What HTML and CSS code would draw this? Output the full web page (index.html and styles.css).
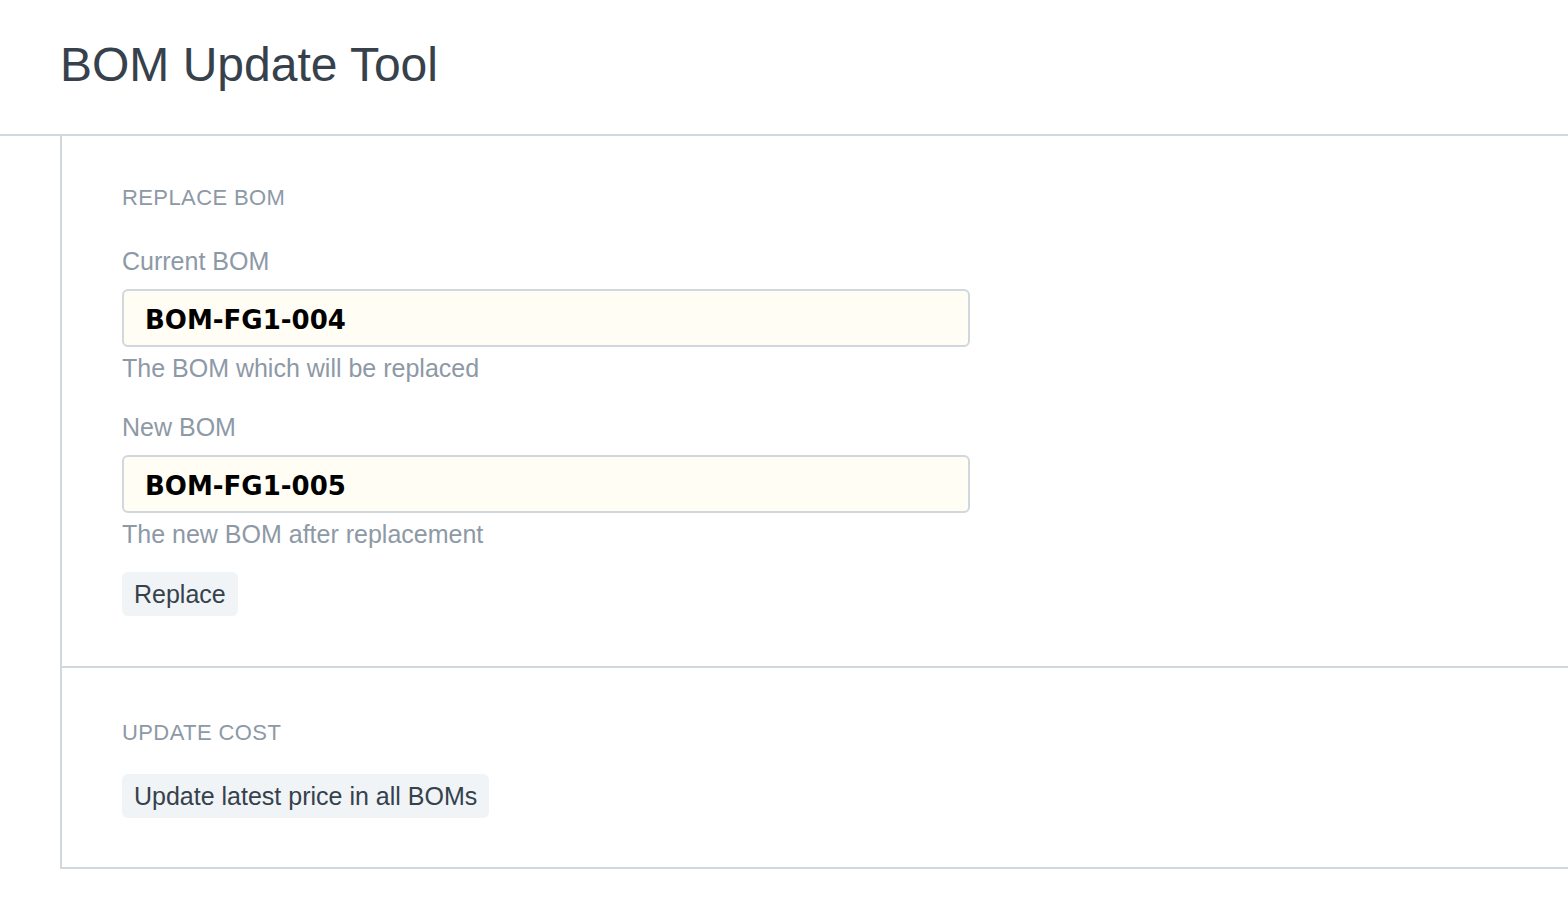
FILE: index.html
```html
<!DOCTYPE html>
<html lang="en">
<head>
<meta charset="utf-8">
<title>BOM Update Tool</title>
<link rel="stylesheet" href="styles.css">
</head>
<body>
<header class="page-head">
  <h1 class="page-title">BOM Update Tool</h1>
</header>
<main class="card">
  <section class="section section-replace">
    <div class="section-head">Replace BOM</div>
    <div class="form-group">
      <label class="control-label" for="current-bom">Current BOM</label>
      <input class="control-input" id="current-bom" type="text" value="BOM-FG1-004">
      <p class="help-box">The BOM which will be replaced</p>
    </div>
    <div class="form-group">
      <label class="control-label" for="new-bom">New BOM</label>
      <input class="control-input" id="new-bom" type="text" value="BOM-FG1-005">
      <p class="help-box">The new BOM after replacement</p>
    </div>
    <button class="btn" type="button">Replace</button>
  </section>
  <section class="section section-cost">
    <div class="section-head">Update Cost</div>
    <button class="btn" type="button">Update latest price in all BOMs</button>
  </section>
</main>
</body>
</html>
```

FILE: styles.css
```css
html, body {
  margin: 0;
  padding: 0;
  background: #ffffff;
}

body {
  font-family: "Liberation Sans", Arial, sans-serif;
  color: #36414c;
}

.page-head {
  height: 136px;
  box-sizing: border-box;
  padding: 41px 0 0 60px;
  border-bottom: 2px solid #d1d8dd;
}

.page-title {
  margin: 0;
  font-size: 48px;
  line-height: 48px;
  font-weight: 400;
  letter-spacing: 0;
  color: #36414c;
}

.card {
  display: block;
  margin-left: 60px;
  border-left: 2px solid #d1d8dd;
  border-bottom: 2px solid #d1d8dd;
}

.section {
  display: flex;
  flex-direction: column;
  align-items: flex-start;
  padding-left: 60px;
}

.section-replace {
  padding-top: 51px;
  padding-bottom: 50px;
  border-bottom: 2px solid #d1d8dd;
}

.section-cost {
  padding-top: 54px;
  padding-bottom: 49px;
}

.section-head {
  font-size: 22px;
  line-height: 22px;
  letter-spacing: 0.4px;
  text-transform: uppercase;
  color: #8d99a6;
}

.section-replace .section-head {
  margin-bottom: 40px;
}

.section-cost .section-head {
  margin-bottom: 30px;
}

.form-group {
  display: flex;
  flex-direction: column;
  align-items: flex-start;
  margin-bottom: 34px;
}

.form-group + .form-group {
  margin-bottom: 25px;
}

.control-label {
  font-size: 25px;
  line-height: 25px;
  color: #8d99a6;
  margin-bottom: 15px;
}

.control-input {
  width: 848px;
  height: 58px;
  box-sizing: border-box;
  margin: 0;
  padding: 4px 21px 0 21px;
  border: 2px solid #d1d8dd;
  border-radius: 6px;
  background: #fffdf4;
  font-family: "DejaVu Sans", Verdana, sans-serif;
  font-weight: 700;
  font-size: 26px;
  color: #000000;
  outline: none;
}

.help-box {
  margin: 9px 0 0 0;
  font-size: 25px;
  line-height: 25px;
  color: #8d99a6;
}

.btn {
  height: 44px;
  box-sizing: border-box;
  margin: 0;
  padding: 0 12px;
  border: none;
  border-radius: 6px;
  background: #f0f4f7;
  font-family: "Liberation Sans", Arial, sans-serif;
  font-size: 25px;
  line-height: 44px;
  color: #36414c;
  cursor: pointer;
}
```
